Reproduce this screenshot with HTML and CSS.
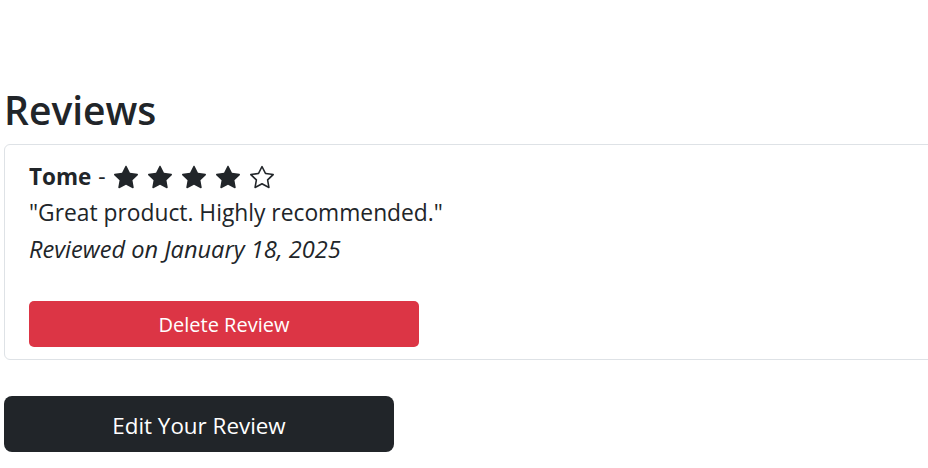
FILE: index.html
```html
<!DOCTYPE html>
<html lang="en">
<head>
<meta charset="utf-8">
<title>Reviews</title>
<link rel="stylesheet" href="styles.css">
</head>
<body>
<main class="page">
  <h2 class="title">Reviews</h2>
  <section class="card">
    <div class="card-body">
      <p class="review-head"><strong class="author">Tome</strong> <span class="dash">-</span>
        <span class="stars">
          <svg class="star" viewBox="0 0 16 16"><path d="M3.612 15.443c-.386.198-.824-.149-.746-.592l.83-4.73L.173 6.765c-.329-.314-.158-.888.283-.95l4.898-.696L7.538.792c.197-.39.73-.39.927 0l2.184 4.327 4.898.696c.441.062.612.636.282.95l-3.522 3.356.83 4.73c.078.443-.36.79-.746.592L8 13.187l-4.389 2.256z"/></svg>
          <svg class="star" viewBox="0 0 16 16"><path d="M3.612 15.443c-.386.198-.824-.149-.746-.592l.83-4.73L.173 6.765c-.329-.314-.158-.888.283-.95l4.898-.696L7.538.792c.197-.39.73-.39.927 0l2.184 4.327 4.898.696c.441.062.612.636.282.95l-3.522 3.356.83 4.73c.078.443-.36.79-.746.592L8 13.187l-4.389 2.256z"/></svg>
          <svg class="star" viewBox="0 0 16 16"><path d="M3.612 15.443c-.386.198-.824-.149-.746-.592l.83-4.73L.173 6.765c-.329-.314-.158-.888.283-.95l4.898-.696L7.538.792c.197-.39.73-.39.927 0l2.184 4.327 4.898.696c.441.062.612.636.282.95l-3.522 3.356.83 4.73c.078.443-.36.79-.746.592L8 13.187l-4.389 2.256z"/></svg>
          <svg class="star" viewBox="0 0 16 16"><path d="M3.612 15.443c-.386.198-.824-.149-.746-.592l.83-4.73L.173 6.765c-.329-.314-.158-.888.283-.95l4.898-.696L7.538.792c.197-.39.73-.39.927 0l2.184 4.327 4.898.696c.441.062.612.636.282.95l-3.522 3.356.83 4.73c.078.443-.36.79-.746.592L8 13.187l-4.389 2.256z"/></svg>
          <svg class="star" viewBox="0 0 16 16"><path d="M2.866 14.85c-.078.444.36.791.746.593l4.39-2.256 4.389 2.256c.386.198.824-.149.746-.592l-.83-4.73 3.522-3.356c.33-.314.16-.888-.282-.95l-4.898-.696L8.465.792a.513.513 0 0 0-.927 0L5.354 5.12l-4.898.696c-.441.062-.612.636-.283.95l3.523 3.356-.83 4.73zm4.905-2.767-3.686 1.894.694-3.957a.565.565 0 0 0-.163-.505L1.71 6.745l4.052-.576a.525.525 0 0 0 .393-.288L8 2.223l1.847 3.658a.525.525 0 0 0 .393.288l4.052.575-2.906 2.77a.565.565 0 0 0-.163.506l.694 3.957-3.686-1.894a.503.503 0 0 0-.461 0z"/></svg>
        </span>
      </p>
      <p class="quote">"Great product. Highly recommended."</p>
      <p class="date">Reviewed on January 18, 2025</p>
      <button class="btn btn-delete" type="button">Delete Review</button>
    </div>
  </section>
  <button class="btn btn-edit" type="button">Edit Your Review</button>
</main>
</body>
</html>
```

FILE: styles.css
```css
* { box-sizing: border-box; }
html, body { margin: 0; padding: 0; background: #fff; }
body {
  font-family: "Open Sans", "Noto Sans", sans-serif;
  color: #212529;
  font-size: 22.8px;
}
.page {
  padding: 86px 0 0 4px;
  width: 1000px;
}
.title {
  margin: 0 0 10px 0;
  font-size: 39px;
  font-weight: 600;
  line-height: 48px;
}
.card {
  border: 1px solid #dee2e6;
  border-radius: 6px;
  width: 1000px;
}
.card-body {
  padding: 14px 24px 12px 24px;
}
.review-head,
.quote,
.date {
  margin: 0;
  line-height: 36px;
  height: 36px;
  display: flex;
  align-items: center;
}
.author { font-weight: 700; font-size: 22.5px; }
.dash { margin: 0 8px 0 7px; }
.stars { display: flex; gap: 10px; }
.star { width: 24px; height: 24px; fill: #212529; }
.date { font-style: italic; font-size: 23.6px; margin-bottom: 34px; }
.btn {
  display: flex;
  align-items: center;
  justify-content: center;
  border: none;
  font-family: inherit;
  color: #fff;
  cursor: pointer;
}
.btn-delete {
  width: 390px;
  height: 46px;
  background: #dc3545;
  border-radius: 5px;
  font-size: 20px;
}
.btn-edit {
  margin-top: 36px;
  width: 390px;
  height: 56px;
  padding-top: 3px;
  background: #212529;
  border-radius: 8px;
  font-size: 22.4px;
}
```
